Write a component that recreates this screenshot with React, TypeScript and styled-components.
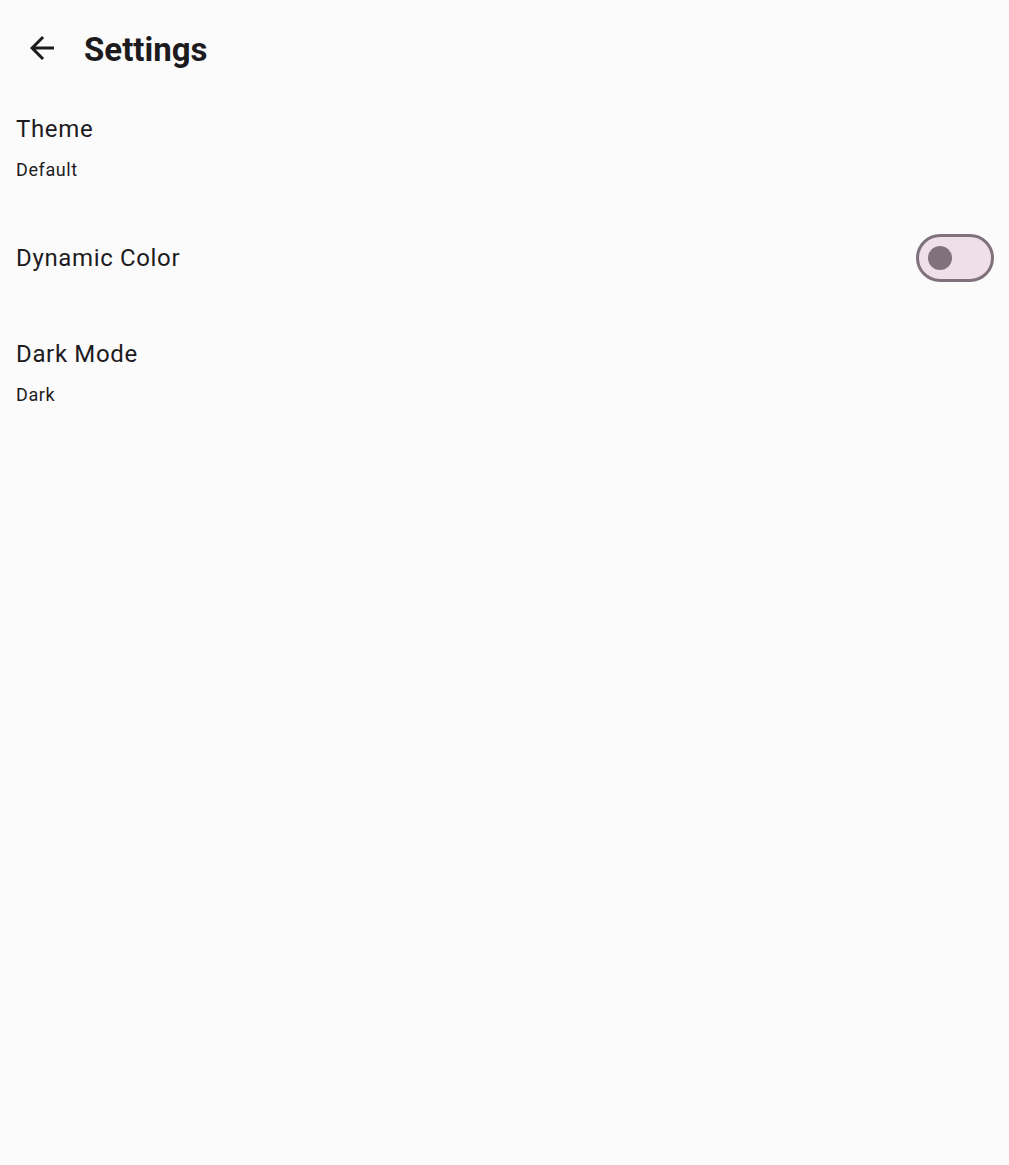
import React, { useState } from "react";
import styled, { createGlobalStyle } from "styled-components";

const GlobalStyle = createGlobalStyle`
  html, body {
    margin: 0;
    padding: 0;
    background: #fcfbfc;
  }
  body {
    font-family: Roboto, "Noto Sans", "Liberation Sans", sans-serif;
    color: #1d1b1e;
    -webkit-font-smoothing: antialiased;
  }
`;

const Page = styled.div`
  width: 1009px;
  min-height: 1165px;
  background: #fcfbfc;
  display: flex;
  flex-direction: column;
`;

const TopBar = styled.header`
  height: 96px;
  display: flex;
  align-items: center;
  padding-left: 6px;
`;

const IconButton = styled.button`
  width: 72px;
  height: 72px;
  border: none;
  background: transparent;
  padding: 0;
  display: flex;
  align-items: center;
  justify-content: center;
  color: #1d1b1e;
  cursor: pointer;
`;

const Title = styled.h1`
  margin: 4px 0 0 6px;
  font-size: 33px;
  font-weight: 700;
  line-height: 40px;
  letter-spacing: 0;
  color: #1d1b1e;
`;

const List = styled.div`
  display: flex;
  flex-direction: column;
  gap: 24px;
  padding-top: 1px;
`;

const Row = styled.div<{ $withControl?: boolean }>`
  display: flex;
  align-items: center;
  justify-content: space-between;
  padding: ${(p) => (p.$withControl ? "13px 15px 16px 16px" : "14px 15px 14px 16px")};
`;

const Texts = styled.div`
  display: flex;
  flex-direction: column;
`;

const ItemTitle = styled.div`
  font-size: 24px;
  line-height: 36px;
  letter-spacing: 0.65px;
  color: #1d1b1e;
`;

const ItemSub = styled.div`
  margin-top: 10px;
  font-size: 18px;
  line-height: 26px;
  letter-spacing: 0.6px;
  color: #1d1b1e;
`;

const Track = styled.button<{ $on: boolean }>`
  width: 78px;
  height: 48px;
  box-sizing: border-box;
  border-radius: 24px;
  border: 3px solid ${(p) => (p.$on ? "transparent" : "#7f727c")};
  background: ${(p) => (p.$on ? "#7f5272" : "#efdfe8")};
  padding: 0;
  position: relative;
  cursor: pointer;
`;

const Thumb = styled.span<{ $on: boolean }>`
  position: absolute;
  top: 50%;
  left: ${(p) => (p.$on ? "39px" : "9px")};
  width: ${(p) => (p.$on ? "36px" : "24px")};
  height: ${(p) => (p.$on ? "36px" : "24px")};
  transform: translateY(-50%);
  border-radius: 50%;
  background: ${(p) => (p.$on ? "#ffffff" : "#7f727c")};
`;

const Switch: React.FC = () => {
  const [on, setOn] = useState(false);
  return (
    <Track $on={on} onClick={() => setOn(!on)} aria-pressed={on}>
      <Thumb $on={on} />
    </Track>
  );
};

const ArrowBack = () => (
  <svg width="36" height="36" viewBox="0 0 24 24" fill="currentColor">
    <path d="M20 11H7.83l5.59-5.59L12 4l-8 8 8 8 1.41-1.41L7.83 13H20v-2z" />
  </svg>
);

export default function App() {
  return (
    <>
      <GlobalStyle />
      <Page>
        <TopBar>
          <IconButton aria-label="Back">
            <ArrowBack />
          </IconButton>
          <Title>Settings</Title>
        </TopBar>
        <List>
          <Row>
            <Texts>
              <ItemTitle>Theme</ItemTitle>
              <ItemSub>Default</ItemSub>
            </Texts>
          </Row>
          <Row $withControl>
            <Texts>
              <ItemTitle>Dynamic Color</ItemTitle>
            </Texts>
            <Switch />
          </Row>
          <Row>
            <Texts>
              <ItemTitle>Dark Mode</ItemTitle>
              <ItemSub>Dark</ItemSub>
            </Texts>
          </Row>
        </List>
      </Page>
    </>
  );
}
